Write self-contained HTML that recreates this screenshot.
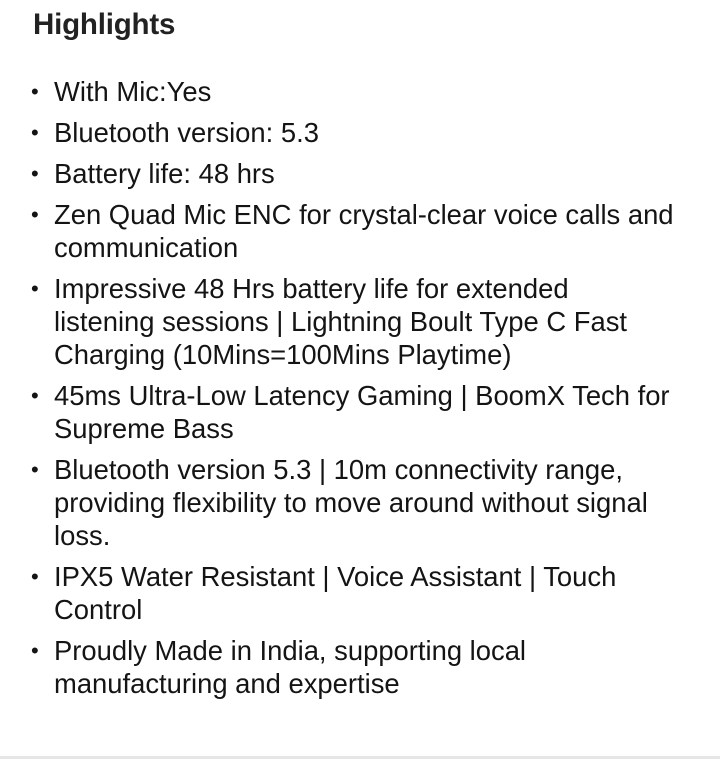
<!DOCTYPE html>
<html><head><meta charset="utf-8"><style>
html,body{margin:0;padding:0;background:#fff;width:720px;height:767px;overflow:hidden}
body{font-family:"Liberation Sans",Arial,sans-serif;color:#111;position:relative}
h1{position:absolute;left:33px;top:7px;margin:0;font-size:29.5px;font-weight:bold;color:#222;line-height:36px;letter-spacing:-0.2px}
.i{position:absolute;left:54px;font-size:27.4px;line-height:33px;white-space:nowrap;color:#141414}
.i:before{content:"•";position:absolute;left:-23px;top:0;font-size:22px}
.hr{position:absolute;left:0;top:756px;width:720px;height:3px;background:#e6e6e6}
</style></head><body>
<h1>Highlights</h1>
<div class="i" style="top:75px">With Mic:Yes</div>
<div class="i" style="top:116px">Bluetooth version: 5.3</div>
<div class="i" style="top:157px">Battery life: 48 hrs</div>
<div class="i" style="top:198px">Zen Quad Mic ENC for crystal-clear voice calls and<br>communication</div>
<div class="i" style="top:272px">Impressive 48 Hrs battery life for extended<br>listening sessions | Lightning Boult Type C Fast<br>Charging (10Mins=100Mins Playtime)</div>
<div class="i" style="top:379px">45ms Ultra-Low Latency Gaming | BoomX Tech for<br>Supreme Bass</div>
<div class="i" style="top:453px">Bluetooth version 5.3 | 10m connectivity range,<br>providing flexibility to move around without signal<br>loss.</div>
<div class="i" style="top:560px">IPX5 Water Resistant | Voice Assistant | Touch<br>Control</div>
<div class="i" style="top:634px">Proudly Made in India, supporting local<br>manufacturing and expertise</div>
<div class="hr"></div>
</body></html>
